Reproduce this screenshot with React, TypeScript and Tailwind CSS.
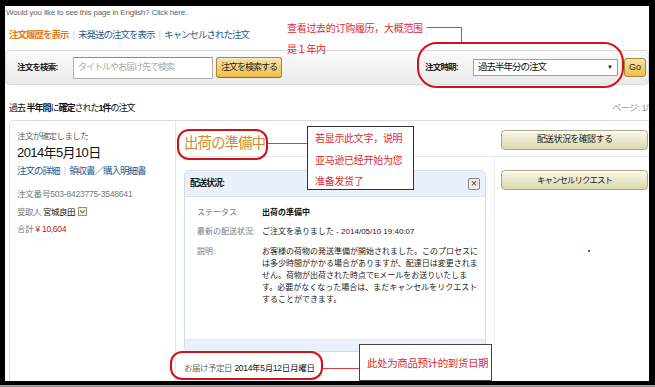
import React from "react";

function CheckIcon() {
  return (
    <svg width="9" height="9" viewBox="0 0 9 9" className="inline-block ml-[3px] align-[-1px]">
      <rect x="0.5" y="0.5" width="8" height="8" fill="#f4f6ee" stroke="#8c9a70" />
      <polyline points="2.2,3.5 4.5,5.8 6.8,3.5" fill="none" stroke="#6b7a50" strokeWidth="1.2" />
    </svg>
  );
}

export default function App() {
  const red = "text-[#dc2a30]";
  return (
    <div className="w-[655px] h-[387px] bg-black flex flex-col overflow-hidden font-['Liberation_Sans','Noto_Sans_CJK_JP',sans-serif]">
      <div className="relative mt-[6px] ml-[5px] w-[644px] h-[375px] bg-white overflow-hidden">
        {/* English banner */}
        <div className="h-[12px] pl-[1px] pt-[2px] text-[8px] leading-[10px] tracking-[-0.2px] text-[#666] whitespace-nowrap">
          Would you like to see this page in English? <span className="text-[#3b6790]">Click here.</span>
        </div>

        {/* Tabs */}
        <div className="h-[32px] pl-[4px] pt-[2px] flex items-center text-[9.5px] tracking-[-1px] whitespace-nowrap">
          <span className="text-[#e47911] font-bold">注文履歴を表示</span>
          <span className="mx-[4px] text-[#cfcfcf]">|</span>
          <span className="text-[#1f5c8b]">未発送の注文を表示</span>
          <span className="mx-[4px] text-[#cfcfcf]">|</span>
          <span className="text-[#1f5c8b]">キャンセルされた注文</span>
        </div>

        {/* Search panel */}
        <div className="h-[35px] flex items-center justify-between rounded-[4px] border border-[#dcdcdc] bg-linear-to-b from-[#fafafa] to-[#ebebeb] pl-[11px] pr-[2px]">
          <div className="flex items-center">
            <span className="w-[56px] font-bold text-[8.5px] tracking-[-0.8px] text-[#222] whitespace-nowrap">注文を検索:</span>
            <div className="w-[140px] h-[22px] border border-[#b0b0b0] border-t-[#8c8c8c] bg-white flex items-center pl-[4px] text-[9px] tracking-[-1px] text-[#a8a8a8] whitespace-nowrap">
              タイトルやお届け先で検索
            </div>
            <div className="ml-[3px] w-[66px] h-[21px] rounded-[3px] border border-[#a88734] border-b-[#8a6d25] bg-linear-to-b from-[#f8e2a8] to-[#efbe43] flex items-center justify-center text-[9px] tracking-[-1px] text-[#222] whitespace-nowrap shadow-[inset_0_1px_0_#fbeecb]">
              注文を検索する
            </div>
          </div>
          <div className="flex items-center">
            <span className="w-[48px] font-bold text-[8.5px] tracking-[-0.8px] text-[#222] whitespace-nowrap">注文時期:</span>
            <div className="w-[145px] h-[17px] border border-[#a0a0a0] bg-white flex items-center justify-between pl-[4px] pr-[4px] text-[9.5px] tracking-[-1px] text-[#111] whitespace-nowrap">
              <span>過去半年分の注文</span>
              <span className="text-[6px] tracking-normal">▼</span>
            </div>
            <div className="ml-[6px] w-[22px] h-[19px] rounded-[3px] border border-[#a88734] bg-linear-to-b from-[#f8e2a8] to-[#efbe43] flex items-center justify-center text-[9px] text-[#222]">
              Go
            </div>
          </div>
        </div>

        {/* Summary row */}
        <div className="h-[35px] pt-[17px] pl-[4px] pr-[1px] flex justify-between text-[9px] leading-[12px] whitespace-nowrap">
          <span className="tracking-[-1px] text-[#111]">
            過去 <b>半年間</b>に<b>確定</b>された<b>1件</b>の注文
          </span>
          <span className="text-[#9a9a9a] tracking-[-0.5px]">ページ: 1/</span>
        </div>

        {/* Order box */}
        <div className="ml-[4px] h-[261px] border-t border-l border-[#dddddd] rounded-tl-[5px] flex">
          {/* left column */}
          <div className="w-[166px] shrink-0 border-r border-[#e6e6e6] pl-[7px] whitespace-nowrap">
            <div className="mt-[9px] h-[12px] leading-[12px] text-[8.5px] tracking-[-0.6px] text-[#666]">注文が確定しました</div>
            <div className="h-[22px] leading-[22px] text-[13px] tracking-[-0.6px] text-[#111]">2014年5月10日</div>
            <div className="h-[14px] leading-[14px] text-[9.5px] tracking-[-1px] text-[#1f5c8b]">
              注文の詳細<span className="mx-[4px] text-[#cfcfcf]">|</span>領収書／購入明細書
            </div>
            <div className="mt-[9px] h-[14px] leading-[14px] text-[8.5px] tracking-[-0.2px] text-[#777]">注文番号503-8423775-3548641</div>
            <div className="mt-[4px] h-[14px] leading-[14px] text-[8.5px] tracking-[-0.5px]">
              <span className="text-[#777]">受取人</span> <span className="text-[#111]">宮城良田</span>
              <CheckIcon />
            </div>
            <div className="mt-[3px] h-[14px] leading-[14px] text-[8.5px] tracking-[-0.3px]">
              <span className="text-[#777]">合計</span> <span className="text-[#b12704]">¥ 10,604</span>
            </div>
          </div>

          {/* main column */}
          <div className="w-[318px] shrink-0 flex flex-col">
            <div className="h-[36px] border-b border-[#e8e8e8] pl-[8px] pt-[13px] leading-[18px] text-[14.5px] tracking-[-1px] text-[#cf8b37] whitespace-nowrap">
              出荷の準備中
            </div>
            <div className="ml-[8px] mt-[13px] w-[302px] h-[182px] flex flex-col rounded-[5px] border border-[#cfdcec] overflow-hidden">
              <div className="h-[26px] shrink-0 bg-[#eaf1fa] border-b border-[#d8e3f0] flex items-center justify-between pl-[5px] pr-[5px]">
                <span className="font-bold text-[9px] tracking-[-1px] text-[#111]">配送状況:</span>
                <span className="w-[12px] h-[12px] border border-[#8a8a8a] rounded-[2px] bg-[#eeeeee] flex items-center justify-center text-[10px] leading-none text-[#333]">×</span>
              </div>
              <div className="flex-1 bg-white pl-[12px] pt-[9px] text-[8px] whitespace-nowrap">
                <div className="flex h-[14px] leading-[14px]">
                  <span className="w-[65px] text-[#777]">ステータス:</span>
                  <span className="font-bold text-[#111]">出荷の準備中</span>
                </div>
                <div className="flex mt-[5px] h-[14px] leading-[14px]">
                  <span className="w-[65px] text-[#777]">最新の配送状況:</span>
                  <span className="text-[#222]">ご注文を承りました - 2014/05/10 19:40:07</span>
                </div>
                <div className="flex mt-[7px] leading-[12px]">
                  <span className="w-[65px] text-[#777]">説明:</span>
                  <div className="flex flex-col text-[#222]">
                    <span>お客様の荷物の発送準備が開始されました。このプロセスに</span>
                    <span>は多少時間がかかる場合がありますが、配達日は変更されま</span>
                    <span>せん。荷物が出荷された時点でEメールをお送りいたしま</span>
                    <span>す。必要がなくなった場合は、まだキャンセルをリクエスト</span>
                    <span>することができます。</span>
                  </div>
                </div>
              </div>
              <div className="h-[12px] shrink-0 bg-[#eaf1fa] border-t border-[#e0e9f4]" />
            </div>
            <div className="ml-[8px] mt-[8px] h-[16px] leading-[16px] text-[8.5px] whitespace-nowrap">
              <span className="text-[#666] tracking-[-0.5px]">お届け予定日</span>{" "}
              <span className="text-[#111] tracking-[-0.3px]">2014年5月12日月曜日</span>
            </div>
          </div>

          {/* side column */}
          <div className="flex-1 flex flex-col">
            <div className="h-[36px] border-b border-[#e8e8e8] pl-[7px] pt-[9px]">
              <div className="w-[147px] h-[20px] rounded-[4px] border border-[#a9a78a] bg-linear-to-b from-[#f9f9ec] to-[#dad8ad] flex items-center justify-center text-[9px] tracking-[-0.6px] text-[#222] whitespace-nowrap shadow-[inset_0_1px_0_#ffffff]">
                配送状況を確認する
              </div>
            </div>
            <div className="h-[188px] border-l border-[#ececec] pl-[6px] pt-[13px]">
              <div className="w-[147px] h-[20px] rounded-[4px] border border-[#a9a78a] bg-linear-to-b from-[#f9f9ec] to-[#dad8ad] flex items-center justify-center text-[8.5px] tracking-[-1px] text-[#222] whitespace-nowrap shadow-[inset_0_1px_0_#ffffff]">
                キャンセルリクエスト
              </div>
            </div>
          </div>
        </div>

        {/* ===== Annotations (overlay) ===== */}
        <div className={`absolute left-[282px] top-[11px] z-10 text-[10px] leading-[21px] tracking-[-0.3px] whitespace-nowrap font-['Noto_Sans_CJK_SC',sans-serif] ${red}`}>
          <div>查看过去的订购履历，大概范围</div>
          <div>是１年内</div>
        </div>
        <div className="absolute left-[422px] top-[21px] w-[35px] h-[1px] bg-[#d9414a] z-10" />
        <div className="absolute left-[456px] top-[21px] w-[1px] h-[16px] bg-[#d9414a] z-10" />
        <div className="absolute left-[412px] top-[36px] w-[207px] h-[46px] rounded-[20px] border-2 border-[#d0121b] z-10" />

        <div className="absolute left-[172px] top-[123px] w-[91px] h-[31px] rounded-[12px] border-2 border-[#d0121b] z-10" />
        <div className="absolute left-[263px] top-[137px] w-[39px] h-[1px] bg-[#d9414a] z-10" />
        <div className={`absolute left-[302px] top-[120px] w-[107px] h-[64px] border border-[#333] bg-white pl-[7px] z-10 text-[10px] leading-[21.5px] tracking-[-0.3px] whitespace-nowrap font-['Noto_Sans_CJK_SC',sans-serif] ${red}`}>
          <div>若显示此文字，说明</div>
          <div>亚马逊已经开始为您</div>
          <div>准备发货了</div>
        </div>

        <div className="absolute left-[583px] top-[244px] w-[2px] h-[2px] bg-[#e03030] z-10" />

        <div className="absolute left-[165px] top-[345px] w-[153px] h-[29px] rounded-[12px] border-2 border-[#d0121b] z-10" />
        <div className="absolute left-[318px] top-[362px] w-[36px] h-[1px] bg-[#d9414a] z-10" />
        <div className={`absolute left-[354px] top-[338px] w-[133px] h-[37px] border border-[#444] bg-white pl-[7px] pt-[11px] z-10 text-[10.5px] leading-[14px] tracking-[-0.4px] whitespace-nowrap font-['Noto_Sans_CJK_SC',sans-serif] ${red}`}>
          此处为商品预计的到货日期
        </div>
      </div>
      <div className="mt-[4px] h-[2px] bg-[#9a9a9a]" />
    </div>
  );
}
